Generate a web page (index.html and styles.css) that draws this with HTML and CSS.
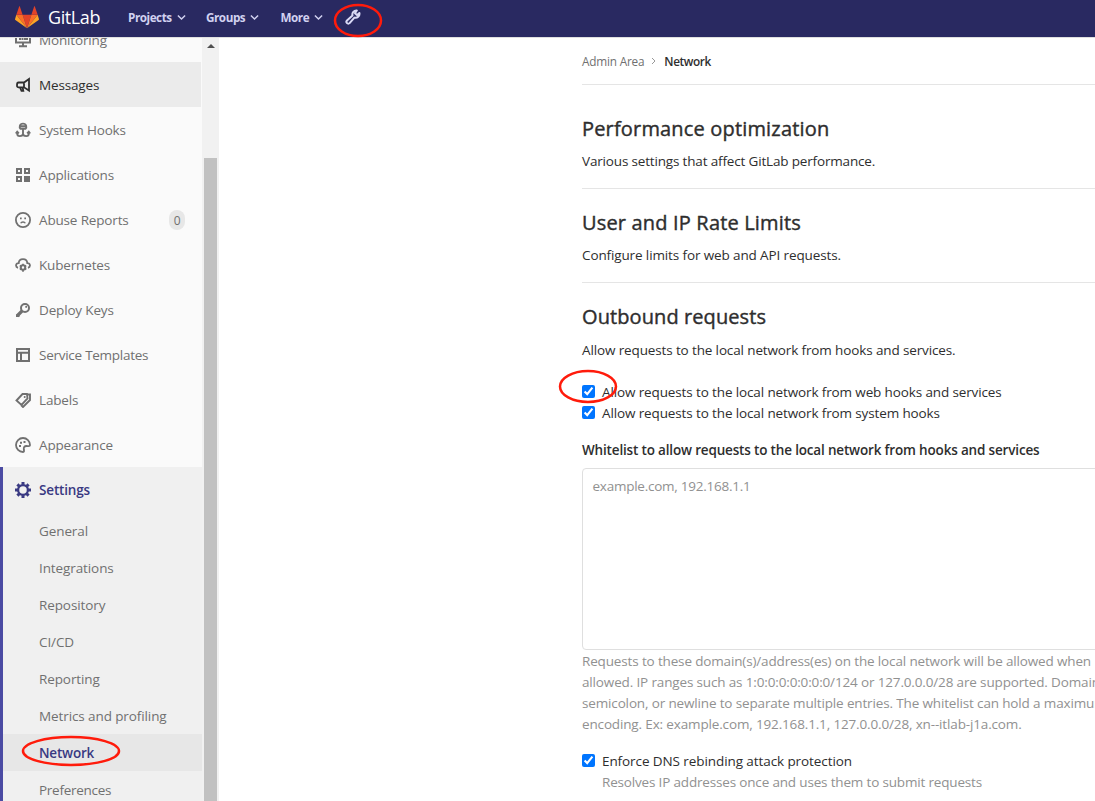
FILE: index.html
```html
<!DOCTYPE html>
<html lang="en">
<head>
<meta charset="utf-8">
<title>Network · Admin Area · GitLab</title>
<link rel="stylesheet" href="styles.css">
</head>
<body>
<header class="navbar">
  <a class="brand">
    <svg class="logo" viewBox="0 0 36 34"><path fill="#e24329" d="m18 33 6.600-20H11.400z"/><path fill="#fc6d26" d="m18 33-6.600-20H2zM18 33l6.600-20H34z"/><path fill="#fca326" d="M2 13 .1 19.200c-.2.600 0 1.200.5 1.600L18 33zM34 13l1.900 6.200c.2.600 0 1.200-.5 1.600L18 33z"/><path fill="#e24329" d="M2 13h9.400L7.400.800c-.2-.700-1.100-.700-1.300 0zM34 13h-9.400L28.600.800c.2-.700 1.100-.700 1.300 0z"/></svg>
    <span class="wordmark">GitLab</span>
  </a>
  <nav class="menu">
    <a class="menu-item projects"><span>Projects</span><svg class="caret" viewBox="0 0 8 6"><path d="m.8 1.200 3.200 3.200 3.200-3.200"/></svg></a>
    <a class="menu-item groups"><span>Groups</span><svg class="caret" viewBox="0 0 8 6"><path d="m.8 1.200 3.200 3.200 3.200-3.200"/></svg></a>
    <a class="menu-item more"><span>More</span><svg class="caret" viewBox="0 0 8 6"><path d="m.8 1.200 3.200 3.200 3.200-3.200"/></svg></a>
    <a class="admin"><svg viewBox="0 0 16 16"><path fill="none" stroke="currentColor" stroke-width="2" stroke-linejoin="round" d="M11.800 1.500a4 4 0 0 0-4.300 5L2 11.500a1.800 1.800 0 1 0 2.600 2.600l4.800-5.500a4 4 0 0 0 5-4.600L12 6 10 4.200z"/></svg></a>
  </nav>
</header>
<div class="layout">
  <aside class="sidebar">
    <nav class="side-nav">
      <a class="item"><svg class="icon" viewBox="0 0 16 16"><path d="M1 3v7.500h14V3M8 11v3M4 14.200h8M5 8V6M7.500 8V4M10 8V5M12 8V6"/></svg><span>Monitoring</span></a>
      <a class="item hover"><svg class="icon" viewBox="0 0 16 16"><path d="M14 2v11.500L9 10.300H3.500C2 10.300 2 9.500 2 8s0-2.500 1.500-2.500H9zM9 5.500v5M5 10.500l1.500 3.300h1.800L7.500 10" stroke-width="1.800"/></svg><span>Messages</span></a>
      <a class="item"><svg class="icon" viewBox="0 0 16 16"><path stroke-width="1.900" d="M5.500 6.800h5C12 5.500 11.500 1.600 8 1.600S4 5.500 5.500 6.800zM5 4.300h6M8 7v6.500M2.200 10v1.500c0 1.700 1 2.600 2.500 2.600S8 13.500 8 11.800c0 1.700 1.800 2.300 3.300 2.300s2.500-.9 2.500-2.600V10M.8 11.500l1.400-1.800 1.600 1.800M12.200 11.500l1.600-1.800 1.400 1.800"/></svg><span>System Hooks</span></a>
      <a class="item"><svg class="icon" viewBox="0 0 16 16"><path d="M2 2h4v4H2zM10 2h4v4h-4zM2 10h4v4H2z"/><path class="solid" d="M9 9h6v6H9z"/></svg><span>Applications</span></a>
      <a class="item"><svg class="icon" viewBox="0 0 16 16"><circle cx="8" cy="8" r="7.100" stroke-width="1.800"/><path class="solid" d="M5 5.500h1.700v1.700H5zM9.300 5.500H11v1.700H9.300z"/><path d="M5.700 11.200C6.500 9.600 9.500 9.600 10.300 11.200" stroke-width="1.400"/></svg><span>Abuse Reports</span><b class="badge">0</b></a>
      <a class="item"><svg class="icon" viewBox="0 0 16 16"><path d="M3 10.800C.2 10 .4 6.300 3.700 6.200 4 .8 12 .8 12.300 6.200c3.300.1 3.500 3.800.7 4.600" stroke-width="1.800"/><circle cx="8" cy="10.500" r="2.200"/><path stroke-width="1.700" d="M8 6.800v1.500M8 12.800v2M4.800 8.600l1.500.9M9.800 11.500l1.500.9M11.200 8.600l-1.500.9M6.300 11.500l-1.500.9"/></svg><span>Kubernetes</span></a>
      <a class="item"><svg class="icon" viewBox="0 0 16 16"><circle cx="10" cy="6" r="4" stroke-width="2"/><path stroke-width="3.200" d="m7 9-5 5"/><path class="solid" d="M10.300 4H12v1.700h-1.700zM1 12.500h3.500V15H1z"/></svg><span>Deploy Keys</span></a>
      <a class="item"><svg class="icon" viewBox="0 0 16 16"><path d="M2 2h12v12H2zM2 5.800h12M6 6v8"/></svg><span class="tight">Service Templates</span></a>
      <a class="item"><svg class="icon" viewBox="0 0 16 16"><path stroke-width="1.900" d="m1.500 8.500 6-6.500H12l.5 4.500-6 6.500zM13 2.500h2V8l-7 7-2-2"/><circle class="solid" cx="9.700" cy="5" r="1"/></svg><span>Labels</span></a>
      <a class="item"><svg class="icon" viewBox="0 0 16 16"><path stroke-width="1.800" d="M15 8a7 7 0 1 0-7 7c1.500 0 1-1.300.8-2.500C8.500 10 9.500 9 11.500 9c2 0 3.500.5 3.500-1z"/><path class="solid" d="M4 8h2v2H4zM5 4.800h2v2H5zM8.500 4h2v2h-2z"/></svg><span>Appearance</span></a>
      <div class="group">
        <a class="item current"><svg class="icon" viewBox="0 0 16 16"><circle cx="8" cy="8" r="4.900" stroke-width="2.300"/><path stroke-width="3" d="M8 0v2.800M8 13.200V16M0 8h2.800M13.200 8H16M2.400 2.400l1.900 1.900M11.700 11.700l1.900 1.900M13.600 2.400l-1.900 1.900M4.300 11.700l-1.900 1.900"/></svg><span>Settings</span></a>
        <a class="sub"><span>General</span></a>
        <a class="sub"><span>Integrations</span></a>
        <a class="sub"><span>Repository</span></a>
        <a class="sub"><span>CI/CD</span></a>
        <a class="sub"><span>Reporting</span></a>
        <a class="sub"><span>Metrics and profiling</span></a>
        <a class="sub active"><span>Network</span></a>
        <a class="sub tight"><span>Preferences</span></a>
      </div>
    </nav>
    <div class="scrollbar"><i class="arrow"></i><i class="thumb"></i></div>
  </aside>
  <main class="content">
    <div class="crumbs"><span class="root">Admin Area</span><svg viewBox="0 0 5 8"><path d="m1 1 3 3-3 3"/></svg><span class="here">Network</span></div>
    <section class="panel"><h4>Performance optimization</h4><p>Various settings that affect GitLab performance.</p></section>
    <section class="panel"><h4>User and IP Rate Limits</h4><p class="limits">Configure limits for web and API requests.</p></section>
    <section class="panel open">
      <h4>Outbound requests</h4><p>Allow requests to the local network from hooks and services.</p>
      <form>
        <label class="check"><input type="checkbox" checked><span>Allow requests to the local network from web hooks and services</span></label>
        <label class="check"><input type="checkbox" checked><span>Allow requests to the local network from system hooks</span></label>
        <div class="field-label">Whitelist to allow requests to the local network from hooks and services</div>
        <textarea placeholder="example.com, 192.168.1.1"></textarea>
        <div class="help">Requests to these domain(s)/address(es) on the local network will be allowed when<br>allowed. IP ranges such as 1:0:0:0:0:0:0:0/124 or 127.0.0.0/28 are supported. Domain<br>semicolon, or newline to separate multiple entries. The whitelist can hold a maximum<br>encoding. Ex: example.com, 192.168.1.1, 127.0.0.0/28, xn--itlab-j1a.com.</div>
        <label class="check dns"><input type="checkbox" checked><span>Enforce DNS rebinding attack protection</span></label>
        <div class="help indent">Resolves IP addresses once and uses them to submit requests</div>
      </form>
    </section>
  </main>
</div>
<svg class="marks" viewBox="0 0 1095 801"><ellipse cx="358" cy="20.500" rx="23" ry="15.500"/><ellipse cx="588" cy="386.500" rx="28" ry="15.500"/><ellipse cx="71" cy="751" rx="48" ry="14"/></svg>
</body>
</html>
```
FILE: styles.css
```css
* { box-sizing: border-box; }
body {
  margin: 0;
  height: 801px;
  overflow: hidden;
  background: #fff;
  color: #2e2e2e;
  font: 13.5px/21px "Open Sans", "Noto Sans", sans-serif;
  letter-spacing: -.125px;
}
.navbar {
  display: flex;
  align-items: center;
  height: 37px;
  padding: 0 0 2px 15px;
  background: #292961;
  color: #d1d1f0;
}
.brand { display: flex; align-items: center; width: 113px; }
.logo { width: 24px; height: 23px; margin-right: 9px; }
.wordmark { color: #fff; font-size: 18px; letter-spacing: -.4px; }
.menu { display: flex; align-items: center; font-size: 11.700px; font-weight: 700; letter-spacing: -.45px; }
.menu-item { display: flex; align-items: center; gap: 5px; }
.projects { width: 78px; }
.groups { width: 74.500px; }
.more { width: 64px; }
.caret { width: 9px; height: 7px; fill: none; stroke: #d1d1f0; stroke-width: 1.300; }
.admin { height: 17px; color: #d9d9f5; }
.admin svg { display: block; width: 16px; height: 16px; }
.layout { display: flex; height: 764px; border-top: 1px solid #dfdfdf; }
.sidebar { display: flex; width: 219px; overflow: hidden; background: #fafafa; }
.side-nav { width: 202px; margin-top: -21px; }
.item { display: flex; align-items: center; gap: 8px; height: 45px; padding: 1px 17px 0 15px; color: #707070; letter-spacing: -.16px; }
.item span { padding-top: 1px; }
.tight { letter-spacing: -.26px; }
.icon { flex: none; width: 16px; height: 16px; fill: none; stroke: currentColor; stroke-width: 2; }
.solid { fill: currentColor; stroke: none; }
.item.hover { width: 201px; background: #ebebeb; color: #2e2e2e; }
.badge { margin-left: auto; width: 16px; height: 20px; border-radius: 8px; background: #e7e7e7; font-size: 12px; font-weight: 400; line-height: 21px; text-align: center; }
.group { border-left: 3px solid #4b4ba3; background: #f0f0f0; }
.item.current { padding-left: 12px; color: #393982; font-weight: 600; }
.sub { display: flex; align-items: center; height: 37px; padding: 2px 0 0 36px; color: #707070; letter-spacing: -.1px; }
.sub.active { background: #e7e7e7; color: #393982; font-weight: 600; letter-spacing: -.2px; }
.sub.tight { letter-spacing: -.28px; }
.scrollbar { display: flex; flex-direction: column; align-items: center; width: 17px; background: #f1f1f1; }
.arrow { margin-top: 6px; border: 4px solid transparent; border-top: 0; border-bottom: 4px solid #505050; }
.thumb { flex: 1; width: 13px; margin-top: 110px; background: #c1c1c1; }
.content { flex: 1; min-width: 0; padding-left: 363px; overflow: hidden; white-space: nowrap; }
.crumbs { display: flex; align-items: center; height: 47px; border-bottom: 1px solid #e5e5e5; color: #707070; font-size: 11.800px; letter-spacing: -.2px; }
.crumbs svg { width: 5px; height: 8px; margin: 0 8px 0 7px; fill: none; stroke: #999; }
.here { color: #2e2e2e; font-weight: 600; letter-spacing: -.4px; }
.panel { height: 94px; border-bottom: 1px solid #e5e5e5; }
.panel:first-of-type { height: 104px; padding-top: 10px; }
.panel.open { height: auto; border: 0; }
h4 { margin: 0; padding-top: 21px; font-size: 20px; font-weight: 400; line-height: 26px; letter-spacing: .17px; -webkit-text-stroke: .4px #2e2e2e; }
.open h4 { letter-spacing: .09px; }
p { margin: 9px 0 0; letter-spacing: -.165px; }
.limits { letter-spacing: -.12px; }
.open p { margin-top: 10px; letter-spacing: -.13px; }
form { padding-top: 21px; }
.check { display: flex; align-items: center; height: 21px; }
.check input { width: 13px; height: 13px; margin: 0 7px 2px 0; }
.check.dns { letter-spacing: -.085px; }
.field-label { margin: 16px 0 7px; font-weight: 600; letter-spacing: -.168px; }
textarea { display: block; width: 560px; height: 182px; padding: 7px 9.500px; border: 1px solid #dfdfdf; border-radius: 4px; font: inherit; letter-spacing: -.25px; resize: none; }
textarea::placeholder { color: #919191; }
.help { margin: 1px 0 16px; color: #919191; letter-spacing: -.148px; }
.help.indent { margin-top: 0; padding-left: 20px; letter-spacing: -.17px; }
.marks { position: absolute; left: 0; top: 0; width: 1095px; height: 801px; fill: none; stroke: #ff1b0b; stroke-width: 2.500; }
```
